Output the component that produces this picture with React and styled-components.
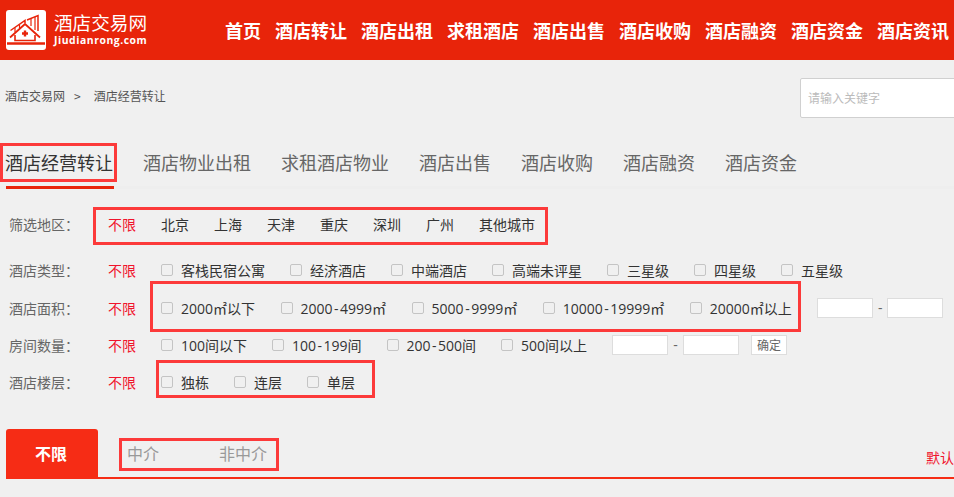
import React from "react";
import styled, { createGlobalStyle } from "styled-components";

const Global = createGlobalStyle`
  html, body { margin: 0; padding: 0; background: #f0f0f0; overflow: hidden; }
  body { font-family: "Noto Sans CJK SC", "Liberation Sans", sans-serif; }
  * { box-sizing: border-box; }
`;

const Page = styled.div`
  position: relative;
  width: 954px;
  height: 497px;
  overflow: hidden;
`;

const Header = styled.header`
  height: 60px;
  background: #e8240a;
  display: flex;
  align-items: center;
  padding-left: 6px;
`;
const LogoMark = styled.div`
  width: 40px;
  height: 40px;
  background: #fff;
  border-radius: 3px;
  flex: none;
`;
const LogoText = styled.div`
  margin: 0 0 3px 8px;
  width: 171px;
  color: #fff;
  flex: none;
`;
const LogoName = styled.div`
  font-size: 18.6px;
  line-height: 24px;
`;
const LogoUrl = styled.div`
  font-family: "Open Sans", sans-serif;
  font-size: 10.4px;
  font-weight: 700;
  line-height: 13px;
  letter-spacing: 0.55px;
`;
const Nav = styled.nav`
  display: flex;
  gap: 14px;
  white-space: nowrap;
`;
const NavItem = styled.a`
  color: #fff;
  font-size: 18px;
  font-weight: 700;
`;

const Crumbs = styled.div`
  height: 83px;
  display: flex;
  justify-content: space-between;
  padding: 18px 0 0 5px;
`;
const CrumbText = styled.div`
  display: flex;
  align-items: center;
  height: 34px;
  font-size: 12px;
  color: #555;
`;
const CrumbSep = styled.span`
  margin: 0 13px 0 9px;
`;
const Search = styled.div`
  width: 160px;
  height: 40px;
  margin-right: -6px;
  background: #fff;
  border: 1px solid #d0d0d0;
  border-radius: 2px;
  padding-left: 7px;
  font-size: 12px;
  line-height: 38px;
  color: #bbb;
`;

const Tabs = styled.div`
  display: flex;
  gap: 30px;
  height: 46px;
  padding-left: 5px;
  border-bottom: 3px solid #eeeeee;
  white-space: nowrap;
`;
const Tab = styled.a`
  position: relative;
  height: 43px;
  font-size: 18px;
  line-height: 38px;
  color: ${({ $active }) => ($active ? "#333" : "#666")};
  &::after {
    content: "";
    display: ${({ $active }) => ($active ? "block" : "none")};
    position: absolute;
    left: 1px;
    right: -1px;
    bottom: -3px;
    height: 3px;
    background: #e8240a;
  }
`;

const Filters = styled.div`
  padding: 17px 0 0 9px;
  font-family: "Open Sans", "Noto Sans CJK SC", sans-serif;
  font-size: 14px;
  color: #333;
`;
const Row = styled.div`
  display: flex;
  align-items: center;
  height: ${({ $h }) => $h}px;
  margin-bottom: ${({ $mb }) => $mb || 0}px;
  white-space: nowrap;
`;
const Label = styled.div`
  width: 99px;
  flex: none;
  color: #666;
`;
const Any = styled.span`
  width: 53px;
  flex: none;
  color: #f0142c;
`;
const City = styled.span`
  width: 53px;
  flex: none;
`;
const Options = styled.div`
  display: flex;
  gap: ${({ $gap }) => $gap}px;
`;
const Option = styled.label`
  display: flex;
  align-items: center;
`;
const Check = styled.span`
  width: 12px;
  height: 12px;
  margin-right: 8px;
  border: 1px solid #c4c4c4;
  border-radius: 2px;
  background: #f0f0f0;
`;
const Hyphen = styled.span`
  margin: 0 1.5px;
`;
const Range = styled.div`
  display: flex;
  align-items: center;
  margin-left: ${({ $ml }) => $ml}px;
`;
const Box = styled.div`
  width: 56px;
  height: 20px;
  background: #fff;
  border: 1px solid #ddd;
`;
const Dash = styled.span`
  width: ${({ $w }) => $w}px;
  text-align: center;
  color: #666;
`;
const Confirm = styled.div`
  width: 36px;
  height: 20px;
  margin-left: 12px;
  background: #fff;
  border: 1px solid #ddd;
  font-family: "Noto Sans CJK SC", sans-serif;
  font-size: 12px;
  line-height: 18px;
  text-align: center;
  color: #666;
`;

const Sort = styled.div`
  position: absolute;
  left: 6px;
  right: 0;
  top: 429px;
  height: 50px;
  border-bottom: 2px solid #f62c15;
  display: flex;
  align-items: stretch;
  font-size: 16px;
  color: #999;
`;
const SortActive = styled.div`
  width: 92px;
  height: 50px;
  padding-right: 2px;
  background: #f62c15;
  border-radius: 3px 3px 0 0;
  color: #fff;
  font-weight: 700;
  text-align: center;
  line-height: 48px;
`;
const SortOption = styled.div`
  margin-left: ${({ $ml }) => $ml}px;
  line-height: 48px;
`;
const SortDefault = styled.div`
  position: absolute;
  left: 920px;
  top: 18px;
  font-size: 14px;
  line-height: 20px;
  color: #f0142c;
  white-space: nowrap;
`;

/* red markers drawn over the screenshot */
const Marker = styled.div`
  position: absolute;
  left: ${({ $x }) => $x}px;
  top: ${({ $y }) => $y}px;
  width: ${({ $w }) => $w}px;
  height: ${({ $h }) => $h}px;
  border: 3px solid #fc3a3a;
`;

const nav = ["首页", "酒店转让", "酒店出租", "求租酒店", "酒店出售", "酒店收购", "酒店融资", "酒店资金", "酒店资讯"];
const tabs = ["酒店经营转让", "酒店物业出租", "求租酒店物业", "酒店出售", "酒店收购", "酒店融资", "酒店资金"];
const cities = ["北京", "上海", "天津", "重庆", "深圳", "广州", "其他城市"];
const types = ["客栈民宿公寓", "经济酒店", "中端酒店", "高端未评星", "三星级", "四星级", "五星级"];
const areas = ["2000㎡以下", "2000-4999㎡", "5000-9999㎡", "10000-19999㎡", "20000㎡以上"];
const rooms = ["100间以下", "100-199间", "200-500间", "500间以上"];
const floors = ["独栋", "连层", "单层"];

function Logo() {
  return (
    <LogoMark>
      <svg width="40" height="40" viewBox="0 0 40 40" fill="none" stroke="#e8240a">
        <path d="M4 27.5 L19 14 L34 27.5" strokeWidth="1.8" />
        <path d="M4.5 20.5 L19 10.5 V13 M21 10 L32 5.5 V21" strokeWidth="1.5" />
        <path d="M9 17.5 V22 M13.5 14.5 V18 M25 8.5 V16 M29 7 V20" strokeWidth="1.2" />
        <path d="M9 25 V30.5 H29 V25" strokeWidth="1.6" />
        <path d="M19 20.5 V26.5 M16 23.5 H22" strokeWidth="2.4" />
        <path d="M1 33.5 H39" strokeWidth="2.6" />
      </svg>
    </LogoMark>
  );
}

function OptionList({ items, gap = 25 }) {
  return (
    <Options $gap={gap}>
      {items.map((t) => {
        const [from, to] = t.split("-");
        return (
          <Option key={t}>
            <Check />
            <span>
              {from}
              {to && <Hyphen>-</Hyphen>}
              {to}
            </span>
          </Option>
        );
      })}
    </Options>
  );
}

export default function App() {
  return (
    <Page>
      <Global />
      <Header>
        <Logo />
        <LogoText>
          <LogoName>酒店交易网</LogoName>
          <LogoUrl>Jiudianrong.com</LogoUrl>
        </LogoText>
        <Nav>
          {nav.map((t) => (
            <NavItem key={t}>{t}</NavItem>
          ))}
        </Nav>
      </Header>

      <Crumbs>
        <CrumbText>
          酒店交易网<CrumbSep>&gt;</CrumbSep>酒店经营转让
        </CrumbText>
        <Search>请输入关键字</Search>
      </Crumbs>

      <Tabs>
        {tabs.map((t, i) => (
          <Tab key={t} $active={i === 0}>
            {t}
          </Tab>
        ))}
      </Tabs>

      <Filters>
        <Row $h={36} $mb={10}>
          <Label>筛选地区：</Label>
          <Any>不限</Any>
          {cities.map((t) => (
            <City key={t}>{t}</City>
          ))}
        </Row>
        <Row $h={36} $mb={1}>
          <Label>酒店类型：</Label>
          <Any>不限</Any>
          <OptionList items={types} />
        </Row>
        <Row $h={37}>
          <Label>酒店面积：</Label>
          <Any>不限</Any>
          <OptionList items={areas} gap={25.5} />
          <Range $ml={25.5}>
            <Box />
            <Dash $w={14}>-</Dash>
            <Box />
          </Range>
        </Row>
        <Row $h={37}>
          <Label>房间数量：</Label>
          <Any>不限</Any>
          <OptionList items={rooms} />
          <Range $ml={25}>
            <Box />
            <Dash $w={15}>-</Dash>
            <Box />
            <Confirm>确定</Confirm>
          </Range>
        </Row>
        <Row $h={37}>
          <Label>酒店楼层：</Label>
          <Any>不限</Any>
          <OptionList items={floors} />
        </Row>
      </Filters>

      <Sort>
        <SortActive>不限</SortActive>
        <SortOption $ml={29}>中介</SortOption>
        <SortOption $ml={60}>非中介</SortOption>
        <SortDefault>默认排序</SortDefault>
      </Sort>

      <Marker $x={0} $y={143} $w={117} $h={39} />
      <Marker $x={93} $y={207} $w={455} $h={38} />
      <Marker $x={150} $y={281} $w={651} $h={51} />
      <Marker $x={156} $y={360} $w={219} $h={38} />
      <Marker $x={119} $y={438} $w={160} $h={33} />
    </Page>
  );
}
